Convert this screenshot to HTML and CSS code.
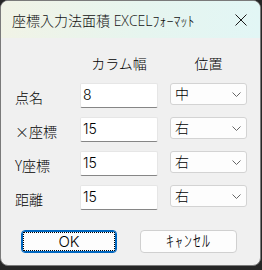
FILE: index.html
```html
<!DOCTYPE html>
<html lang="ja">
<head>
<meta charset="utf-8">
<link rel="stylesheet" href="styles.css">
</head>
<body>
<div class="window">
  <div class="titlebar">
    <span class="title">座標入力法面積 EXCELﾌｫｰﾏｯﾄ</span>
    <svg class="close" width="12" height="12" viewBox="0 0 12 12"><path d="M0.5 0.5L11.5 11.5M11.5 0.5L0.5 11.5" stroke="#1a1a1a" stroke-width="1" fill="none"/></svg>
  </div>
  <div class="content">
    <div class="grid">
      <div></div>
      <div class="head">カラム幅</div>
      <div class="head head-sel">位置</div>

      <div class="label">点名</div>
      <div class="input">8</div>
      <div class="select"><span>中</span><svg class="chev" width="9" height="5" viewBox="0 0 9 5"><path d="M0.5 0.5L4.5 4.5L8.5 0.5" stroke="#666" stroke-width="1" fill="none"/></svg></div>

      <div class="label">×座標</div>
      <div class="input">15</div>
      <div class="select"><span>右</span><svg class="chev" width="9" height="5" viewBox="0 0 9 5"><path d="M0.5 0.5L4.5 4.5L8.5 0.5" stroke="#666" stroke-width="1" fill="none"/></svg></div>

      <div class="label">Y座標</div>
      <div class="input">15</div>
      <div class="select"><span>右</span><svg class="chev" width="9" height="5" viewBox="0 0 9 5"><path d="M0.5 0.5L4.5 4.5L8.5 0.5" stroke="#666" stroke-width="1" fill="none"/></svg></div>

      <div class="label">距離</div>
      <div class="input">15</div>
      <div class="select"><span>右</span><svg class="chev" width="9" height="5" viewBox="0 0 9 5"><path d="M0.5 0.5L4.5 4.5L8.5 0.5" stroke="#666" stroke-width="1" fill="none"/></svg></div>
    </div>
    <div class="buttons">
      <div class="btn ok">OK</div>
      <div class="btn cancel">ｷｬﾝｾﾙ</div>
    </div>
  </div>
</div>
</body>
</html>
```
FILE: styles.css
```css
html, body {
  margin: 0;
  padding: 0;
}
body {
  width: 262px;
  height: 270px;
  background: #262626;
  font-family: "Liberation Sans", "Noto Sans CJK JP", sans-serif;
  font-weight: 300;
  color: #000;
  overflow: hidden;
}
.window {
  box-sizing: border-box;
  width: 261px;
  height: 266px;
  border: 1px solid #7a7a7a;
  border-radius: 8px;
  background: #f0f0f0;
  overflow: hidden;
}
.titlebar {
  height: 37px;
  display: flex;
  align-items: center;
  padding-left: 11px;
  padding-right: 13px;
  background: linear-gradient(to right, #f1f3e6, #e6f5ef 55%, #e2f6f5);
}
.title {
  font-family: "Open Sans", "Noto Sans CJK JP", sans-serif;
  font-size: 14px;
  line-height: 20px;
  margin-top: 2px;
  color: #111;
  white-space: nowrap;
}
.close {
  margin-left: auto;
  display: block;
}
.content {
  padding: 16px 0 0 13px;
}
.grid {
  display: grid;
  grid-template-columns: 66px 90px 77px;
  grid-template-rows: 20px 25px 25px 25px 25px;
  row-gap: 9px;
}
.head {
  width: 78px;
  text-align: center;
  font-size: 14px;
  line-height: 20px;
}
.head-sel {
  width: 77px;
}
.label {
  font-family: "Noto Sans CJK JP", sans-serif;
  font-size: 14px;
  line-height: 20px;
  padding-top: 4px;
  padding-left: 1px;
}
.input {
  box-sizing: border-box;
  width: 78px;
  height: 25px;
  background: #fff;
  border: 1px solid #e6e6e6;
  border-bottom: 1px solid #868686;
  border-radius: 2px;
  padding-left: 2px;
  font-family: "Inter", "Liberation Sans", sans-serif;
  font-size: 14px;
  line-height: 22px;
}
.select {
  box-sizing: border-box;
  width: 77px;
  height: 22px;
  background: #fdfdfd;
  border: 1px solid #d3d3d3;
  border-radius: 3px;
  display: flex;
  align-items: center;
  padding-left: 4px;
  padding-right: 5px;
  font-size: 14px;
  line-height: 20px;
}
.chev {
  margin-left: auto;
  display: block;
}
.buttons {
  display: flex;
  gap: 23px;
  margin-top: 20px;
  margin-left: 7px;
}
.btn {
  box-sizing: border-box;
  height: 23px;
  border-radius: 4px;
  background: #fdfdfd;
  border: 1px solid #d0d0d0;
  text-align: center;
  font-size: 14px;
  line-height: 21px;
  position: relative;
}
.ok {
  width: 96px;
  font-family: "Inter", "Liberation Sans", sans-serif;
  font-size: 15px;
  border: 1px solid #0067c0;
  box-shadow: inset 0 0 0 1px #0067c0;
}
.ok::after {
  content: "";
  position: absolute;
  left: 1px;
  top: 1px;
  right: 1px;
  bottom: 1px;
  border: 1px dotted #000;
  border-radius: 1px;
}
.cancel {
  width: 97px;
  font-size: 16px;
  letter-spacing: 1px;
}
```
